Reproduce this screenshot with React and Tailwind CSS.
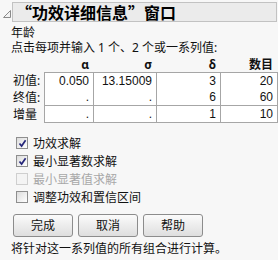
const rows = [
  { label: '初值:', vals: ['0.050', '13.15009', '3', '20'] },
  { label: '终值:', vals: ['.', '.', '6', '60'] },
  { label: '增量', vals: ['.', '.', '1', '10'] },
]

const cols = ['w-[49px]', 'w-[63px]', 'w-[64px]', 'w-[57px]']

function Check({ checked, disabled, label }) {
  return (
    <div className="flex items-center h-[18px] pl-[5px]">
      <span
        className={
          'w-[12px] h-[12px] border flex items-center justify-center ' +
          (disabled
            ? 'border-[#cfcfcf] bg-[#f4f4f4]'
            : 'border-[#8e8e8e] bg-gradient-to-br from-[#dcdcdc] to-[#ffffff]')
        }
      >
        {checked && (
          <svg width="9" height="9" viewBox="0 0 9 9">
            <path d="M1.5 4.5 L3.6 7 L7.6 1.2" fill="none" stroke="#25267a" strokeWidth="1.7" />
          </svg>
        )}
      </span>
      <span className={'ml-[5px] ' + (disabled ? 'text-[#a8a8a8]' : 'text-[#111]')}>{label}</span>
    </div>
  )
}

function Btn({ children }) {
  return (
    <button className="w-[60px] h-[23px] rounded-[3px] border border-[#8c8c8c] bg-gradient-to-b from-[#fbfbfb] to-[#dedede] text-[12px] text-[#111] leading-none">
      {children}
    </button>
  )
}

export default function App() {
  return (
    <div className="w-[278px] h-[260px] bg-[#f7f7f7] text-[12px] leading-[15px] text-[#111] overflow-hidden font-['Noto_Sans','Noto_Sans_CJK_SC',sans-serif]">
      <div className="flex pt-[2px]">
        <div className="w-[12px] pt-[8px] pl-[3px]">
          <svg width="8" height="8" viewBox="0 0 8 8">
            <path d="M0.5 7.5 L7.5 0.5 L7.5 7.5 Z" fill="#f2f2f2" stroke="#8a8a8a" strokeWidth="1" />
          </svg>
        </div>
        <div className="w-[265px] h-[20px] border border-[#c2c2c2] bg-[#ebebeb] flex items-center pl-[3px]">
          <span className="text-[16px] font-bold leading-none text-black font-['Noto_Sans_CJK_SC',sans-serif]">
            “功效详细信息”窗口
          </span>
        </div>
      </div>

      <div className="pl-[11px]">
        <div className="mt-[3px] h-[15px]">年龄</div>
        <div className="h-[15px]">点击每项并输入 1 个、2 个或一系列值:</div>

        <div className="flex h-[17px] items-end">
          <div className="w-[34px]" />
          {['α', 'σ', 'δ', '数目'].map((h, i) => (
            <div key={h} className={cols[i] + ' text-right font-bold pr-[5px] leading-[15px]'}>
              {h}
            </div>
          ))}
        </div>

        {rows.map((r, ri) => (
          <div key={r.label} className="flex h-[17px]">
            <div className="w-[33px] pl-[2px] leading-[17px]">{r.label}</div>
            <div className={'flex border-l border-[#a6a6a6] ' + (ri === 0 ? 'border-t' : '')}>
              {r.vals.map((v, i) => (
                <div
                  key={i}
                  className={cols[i] + ' h-[17px] bg-white border-r border-b border-[#a6a6a6] text-right pr-[4px] leading-[16px] font-["Liberation_Sans",sans-serif]'}
                >
                  {v}
                </div>
              ))}
            </div>
          </div>
        ))}

        <div className="mt-[11px]">
          <Check checked label="功效求解" />
          <Check checked label="最小显著数求解" />
          <Check disabled label="最小显著值求解" />
          <Check label="调整功效和置信区间" />
        </div>

        <div className="flex gap-[5px] mt-[8px] pl-[2px]">
          <Btn>完成</Btn>
          <Btn>取消</Btn>
          <Btn>帮助</Btn>
        </div>

        <div className="mt-[4px]">将针对这一系列值的所有组合进行计算。</div>
      </div>
    </div>
  )
}
